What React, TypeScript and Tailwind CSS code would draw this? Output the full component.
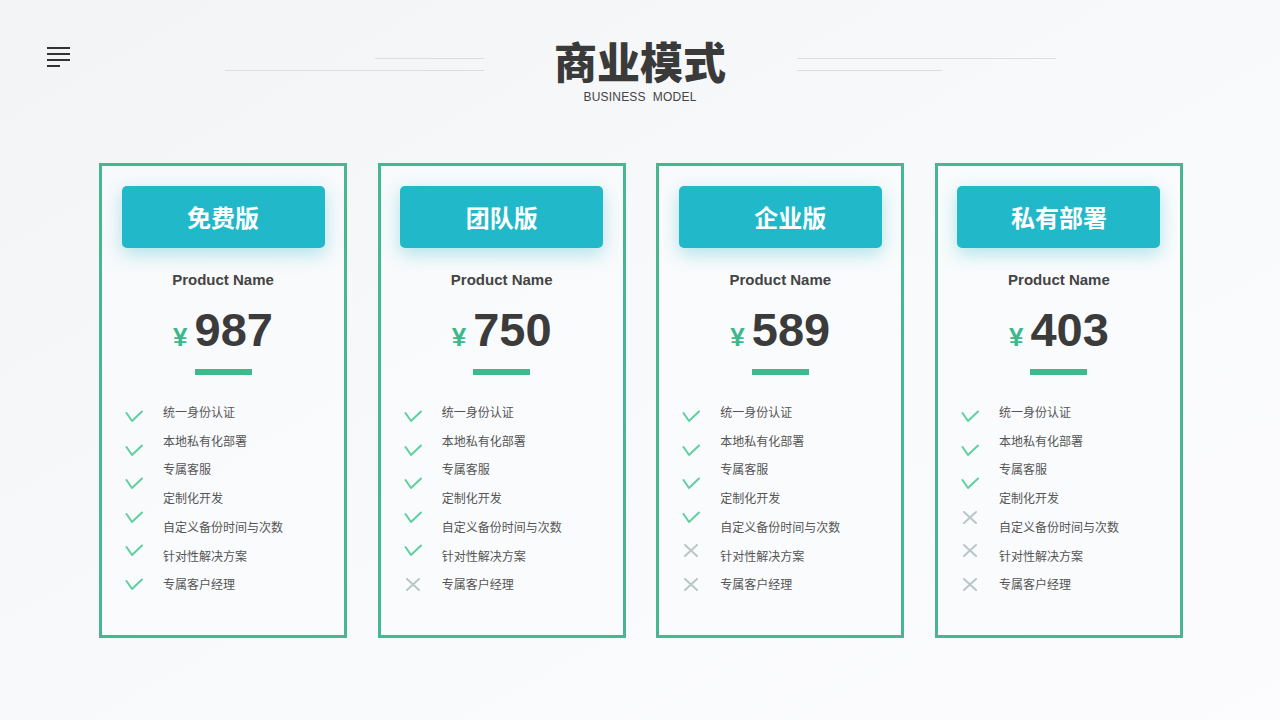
import React from "react";

type Plan = {
  title: string;
  price: string;
  marks: boolean[];
  shift?: boolean;
};

const features = [
  "统一身份认证",
  "本地私有化部署",
  "专属客服",
  "定制化开发",
  "自定义备份时间与次数",
  "针对性解决方案",
  "专属客户经理",
];

const plans: Plan[] = [
  { title: "免费版", price: "987", marks: [true, true, true, true, true, true] },
  { title: "团队版", price: "750", marks: [true, true, true, true, true, false] },
  { title: "企业版", price: "589", marks: [true, true, true, true, false, false], shift: true },
  { title: "私有部署", price: "403", marks: [true, true, true, false, false, false] },
];

const cjk = { fontFamily: '"Noto Sans CJK SC", "Noto Sans", sans-serif' };
const latin = { fontFamily: '"Liberation Sans", Arial, sans-serif' };

function Check() {
  return (
    <svg width="18" height="13" viewBox="0 0 18 13" fill="none">
      <path d="M1.5 3 L7 11 L17 1.5" stroke="#5fd09f" strokeWidth="2" strokeLinecap="round" strokeLinejoin="round" />
    </svg>
  );
}

function Cross() {
  return (
    <svg width="18" height="13" viewBox="0 0 18 13" fill="none">
      <path d="M3 1 L15 12 M15 1 L3 12" stroke="#b9c7c7" strokeWidth="2" strokeLinecap="round" />
    </svg>
  );
}

function PlanCard({ plan }: { plan: Plan }) {
  return (
    <div className="w-[248px] h-[475px] border-[3px] border-[#45b890] bg-[#fafbfd]/60 flex flex-col items-center">
      <div
        className="mt-[20px] w-[203px] h-[62px] rounded-[5px] bg-[#21b9c9] shadow-[0_6px_18px_rgba(33,185,201,0.35)] flex items-center justify-center"
      >
        <span
          className={`text-white text-[24px] font-bold leading-none ${plan.shift ? "pl-[20px]" : ""}`}
          style={cjk}
        >
          {plan.title}
        </span>
      </div>

      <div className="mt-[23px] text-[15px] leading-[18px] font-bold text-[#444]" style={latin}>
        Product Name
      </div>

      <div className="mt-[17px] flex items-baseline gap-[7px]" style={latin}>
        <span className="text-[26px] font-bold leading-none text-[#3cb98c]">¥</span>
        <span className="text-[47px] font-bold leading-none text-[#3b3b3b]">{plan.price}</span>
      </div>

      <div className="mt-[16px] w-[57px] h-[6px] bg-[#3db98c]" />

      <div className="self-stretch flex items-start pl-[23px]">
        <div className="mt-[35px] w-[18px] flex flex-col gap-[20.6px]">
          {plan.marks.map((ok, i) => (
            <div key={i} className="h-[13px] flex items-center">
              {ok ? <Check /> : <Cross />}
            </div>
          ))}
        </div>
        <div className="mt-[23px] ml-[20px] flex flex-col">
          {features.map((f) => (
            <div key={f} className="text-[12px] leading-[28.7px] text-[#555]" style={cjk}>
              {f}
            </div>
          ))}
        </div>
      </div>
    </div>
  );
}

export default function App() {
  return (
    <div className="relative w-[1280px] h-[720px] overflow-hidden bg-gradient-to-br from-[#f3f4f6] via-[#f8f9fb] to-[#fcfcfe]">
      {/* menu */}
      <div className="absolute left-[47px] top-[47px] flex flex-col gap-[4px]">
        <div className="w-[23px] h-[2px] bg-[#333]" />
        <div className="w-[23px] h-[2px] bg-[#333]" />
        <div className="w-[23px] h-[2px] bg-[#333]" />
        <div className="w-[13px] h-[2px] bg-[#333]" />
      </div>

      {/* title */}
      <div className="flex justify-center items-start">
        <div className="w-[259px] mt-[58px] flex flex-col items-end">
          <div className="w-[109px] h-px bg-[#dcdde0]" />
          <div className="mt-[11px] w-[259px] h-px bg-[#dcdde0]" />
        </div>
        <div className="w-[313px] pt-[38px] flex flex-col items-center">
          <h1 className="text-[43px] leading-[44px] font-black text-[#3a3a3a]" style={cjk}>
            商业模式
          </h1>
          <div className="mt-[8px] text-[12px] leading-[14px] text-[#444] tracking-[0.2px]" style={latin}>
            BUSINESS&nbsp;&nbsp;MODEL
          </div>
        </div>
        <div className="w-[259px] mt-[58px] flex flex-col items-start">
          <div className="w-[259px] h-px bg-[#dcdde0]" />
          <div className="mt-[11px] w-[145px] h-px bg-[#dcdde0]" />
        </div>
      </div>

      {/* cards */}
      <div className="mt-[59px] ml-[99px] w-[1084px] flex justify-between">
        {plans.map((p) => (
          <PlanCard key={p.title} plan={p} />
        ))}
      </div>
    </div>
  );
}
